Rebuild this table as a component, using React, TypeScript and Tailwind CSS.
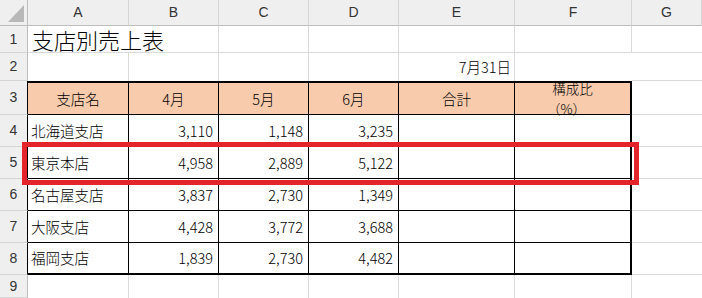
import React from "react";

const colLetters = ["A", "B", "C", "D", "E", "F", "G"];

const data: [string, string, string, string][] = [
  ["北海道支店", "3,110", "1,148", "3,235"],
  ["東京本店", "4,958", "2,889", "5,122"],
  ["名古屋支店", "3,837", "2,730", "1,349"],
  ["大阪支店", "4,428", "3,772", "3,688"],
  ["福岡支店", "1,839", "2,730", "4,482"],
];

const rowHead =
  "bg-[#efefef] border-b border-b-[#d5d5d5] border-r border-r-[#bdbdbd] flex items-center justify-center text-[14px] text-[#333] font-normal font-['Liberation_Sans',sans-serif]";
const rowHeadTable =
  "bg-[#efefef] border-b border-b-[#d5d5d5] border-r border-r-black flex items-center justify-center text-[14px] text-[#333] font-normal font-['Liberation_Sans',sans-serif]";
const gray = "border-r border-b border-[#dadada]";

export default function App() {
  return (
    <div className="relative w-[702px] h-[298px] overflow-hidden bg-white grid grid-cols-[28px_101px_90px_90px_90px_116px_117px_1fr] grid-rows-[26px_27px_28px_34px_32px_32px_32px_32px_32px_1fr] font-['Noto_Sans_CJK_JP',sans-serif] font-light text-black">
      {/* column header row */}
      <div className="bg-[#efefef] border-r border-b border-[#bdbdbd] flex justify-end items-end pr-[3px] pb-[3px]">
        <svg width="16" height="17" viewBox="0 0 16 17">
          <polygon points="16,0 16,17 0,17" fill="#b8b8b8" />
        </svg>
      </div>
      {colLetters.map((c) => (
        <div
          key={c}
          className="bg-[#efefef] border-r border-r-[#d5d5d5] border-b border-b-[#bdbdbd] flex items-center justify-center text-[14px] text-[#333] font-normal font-['Liberation_Sans',sans-serif]"
        >
          {c}
        </div>
      ))}

      {/* row 1 */}
      <div className={rowHead}>1</div>
      <div className="border-b border-[#dadada] flex items-center pl-[4px] text-[22px] whitespace-nowrap overflow-visible z-10">
        支店別売上表
      </div>
      <div className={gray}></div>
      <div className={gray}></div>
      <div className={gray}></div>
      <div className={gray}></div>
      <div className={gray}></div>
      <div className="border-b border-[#dadada]"></div>

      {/* row 2 */}
      <div className={rowHead}>2</div>
      <div className="border-r border-[#dadada]"></div>
      <div className="border-r border-[#dadada]"></div>
      <div className="border-r border-[#dadada]"></div>
      <div className="border-r border-[#dadada]"></div>
      <div className="border-r border-[#dadada] flex items-center justify-end pr-[3px] text-[14.5px]">
        7月31日
      </div>
      <div></div>
      <div className="border-b border-[#dadada]"></div>

      {/* row 3 header */}
      <div className={rowHeadTable}>3</div>
      <div className="bg-[#f8cbad] border-t-2 border-t-black border-b border-b-black border-r border-r-black flex items-center justify-center text-[14.5px]">
        支店名
      </div>
      <div className="bg-[#f8cbad] border-t-2 border-t-black border-b border-b-black border-r border-r-black flex items-center justify-center text-[14.5px]">
        4月
      </div>
      <div className="bg-[#f8cbad] border-t-2 border-t-black border-b border-b-black border-r border-r-black flex items-center justify-center text-[14.5px]">
        5月
      </div>
      <div className="bg-[#f8cbad] border-t-2 border-t-black border-b border-b-black border-r border-r-black flex items-center justify-center text-[14.5px]">
        6月
      </div>
      <div className="bg-[#f8cbad] border-t-2 border-t-black border-b border-b-black border-r border-r-black flex items-center justify-center text-[14.5px]">
        合計
      </div>
      <div className="bg-[#f8cbad] border-t-2 border-t-black border-b border-b-black border-r-2 border-r-black flex flex-col items-center justify-center text-[13.5px] leading-[19.5px]">
        <span className="block leading-[19.5px]">構成比</span>
        <span className="block leading-[19.5px] pr-[12px]">（%）</span>
      </div>
      <div className="border-b border-[#dadada]"></div>

      {/* data rows */}
      {data.map((r, i) => {
        const last = i === data.length - 1;
        return (
          <React.Fragment key={r[0]}>
            <div className={rowHeadTable}>{i + 4}</div>
            <div
              className={
                last
                  ? "border-b-2 border-b-black border-r border-r-black flex items-center pl-[3px] text-[14.5px]"
                  : "border-b border-b-black border-r border-r-black flex items-center pl-[3px] text-[14.5px]"
              }
            >
              {r[0]}
            </div>
            {[r[1], r[2], r[3]].map((v, j) => (
              <div
                key={j}
                className={
                  last
                    ? "border-b-2 border-b-black border-r border-r-black flex items-center justify-end pr-[5px] text-[14.5px]"
                    : "border-b border-b-black border-r border-r-black flex items-center justify-end pr-[5px] text-[14.5px]"
                }
              >
                {v}
              </div>
            ))}
            <div
              className={
                last
                  ? "border-b-2 border-b-black border-r border-r-black"
                  : "border-b border-b-black border-r border-r-black"
              }
            ></div>
            <div
              className={
                last
                  ? "border-b-2 border-b-black border-r-2 border-r-black"
                  : "border-b border-b-black border-r-2 border-r-black"
              }
            ></div>
            <div className="border-b border-[#dadada]"></div>
          </React.Fragment>
        );
      })}

      {/* row 9 */}
      <div className={rowHead}>9</div>
      <div className="border-r border-[#dadada]"></div>
      <div className="border-r border-[#dadada]"></div>
      <div className="border-r border-[#dadada]"></div>
      <div className="border-r border-[#dadada]"></div>
      <div className="border-r border-[#dadada]"></div>
      <div className="border-r border-[#dadada]"></div>
      <div></div>

      {/* red highlight annotation */}
      <div className="absolute left-[22px] top-[142px] w-[617px] h-[43px] border-[5px] border-[#e3242b] pointer-events-none"></div>
    </div>
  );
}
